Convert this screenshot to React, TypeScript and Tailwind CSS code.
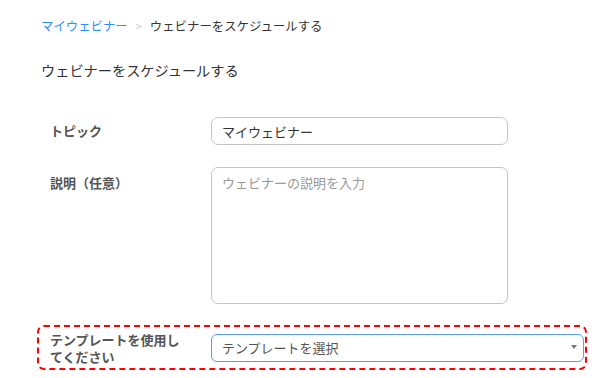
import { useState } from "react";

const font = { fontFamily: '"Noto Sans CJK JP", "Liberation Sans", sans-serif' };

export default function App() {
  const [topic, setTopic] = useState("マイウェビナー");

  return (
    <div
      className="w-[600px] h-[378px] overflow-hidden bg-white text-[#3c3c3c]"
      style={font}
    >
      {/* Breadcrumb */}
      <nav className="flex items-center pl-[41px] pt-[17px] text-[12.4px] leading-[18px]">
        <a href="#" className="text-[#2d8cff]">
          マイウェビナー
        </a>
        <span className="mx-[8px] text-[11px] text-[#c4c4c4]">&gt;</span>
        <span className="text-[#333]">ウェビナーをスケジュールする</span>
      </nav>

      {/* Title */}
      <h1 className="pl-[41px] mt-[25px] text-[14.2px] leading-[20px] text-[#333]">
        ウェビナーをスケジュールする
      </h1>

      {/* Form */}
      <div className="mt-[37px] flex flex-col">
        <div className="flex items-center pl-[50px]">
          <label className="w-[161px] text-[13px] font-bold text-[#555]">トピック</label>
          <input
            value={topic}
            onChange={(e) => setTopic(e.target.value)}
            className="w-[297px] h-[28px] px-[10px] rounded-[7px] border border-[#c3c3d0] text-[13px] text-[#333] outline-none"
          />
        </div>

        <div className="flex items-start pl-[50px] mt-[22px]">
          <label className="w-[161px] pt-[6px] text-[13px] font-bold text-[#555]">説明（任意）</label>
          <textarea
            placeholder="ウェビナーの説明を入力"
            className="w-[297px] h-[137px] px-[10px] py-[5px] rounded-[7px] border border-[#c3c3d0] text-[13px] text-[#333] placeholder:text-[#999] outline-none resize-none"
          />
        </div>

        {/* Highlighted template row */}
        <div className="ml-[37px] mt-[21px] w-[550px] h-[45px] flex items-center pl-[11px] rounded-[7px] border-2 border-dashed border-[#ff0000]">
          <label className="w-[140px] mr-[21px] text-[13px] leading-[17px] font-bold text-[#555]">
            テンプレートを使用してください
          </label>
          <div className="relative w-[373px] h-[28px] rounded-[6px] border border-[#5b9bf5] flex items-center px-[10px]">
            <span className="text-[13px] text-[#555]">テンプレートを選択</span>
            <span className="absolute right-[6px] top-[10px] w-0 h-0 border-l-[3px] border-r-[3px] border-t-[4px] border-l-transparent border-r-transparent border-t-[#777]" />
          </div>
        </div>
      </div>
    </div>
  );
}
